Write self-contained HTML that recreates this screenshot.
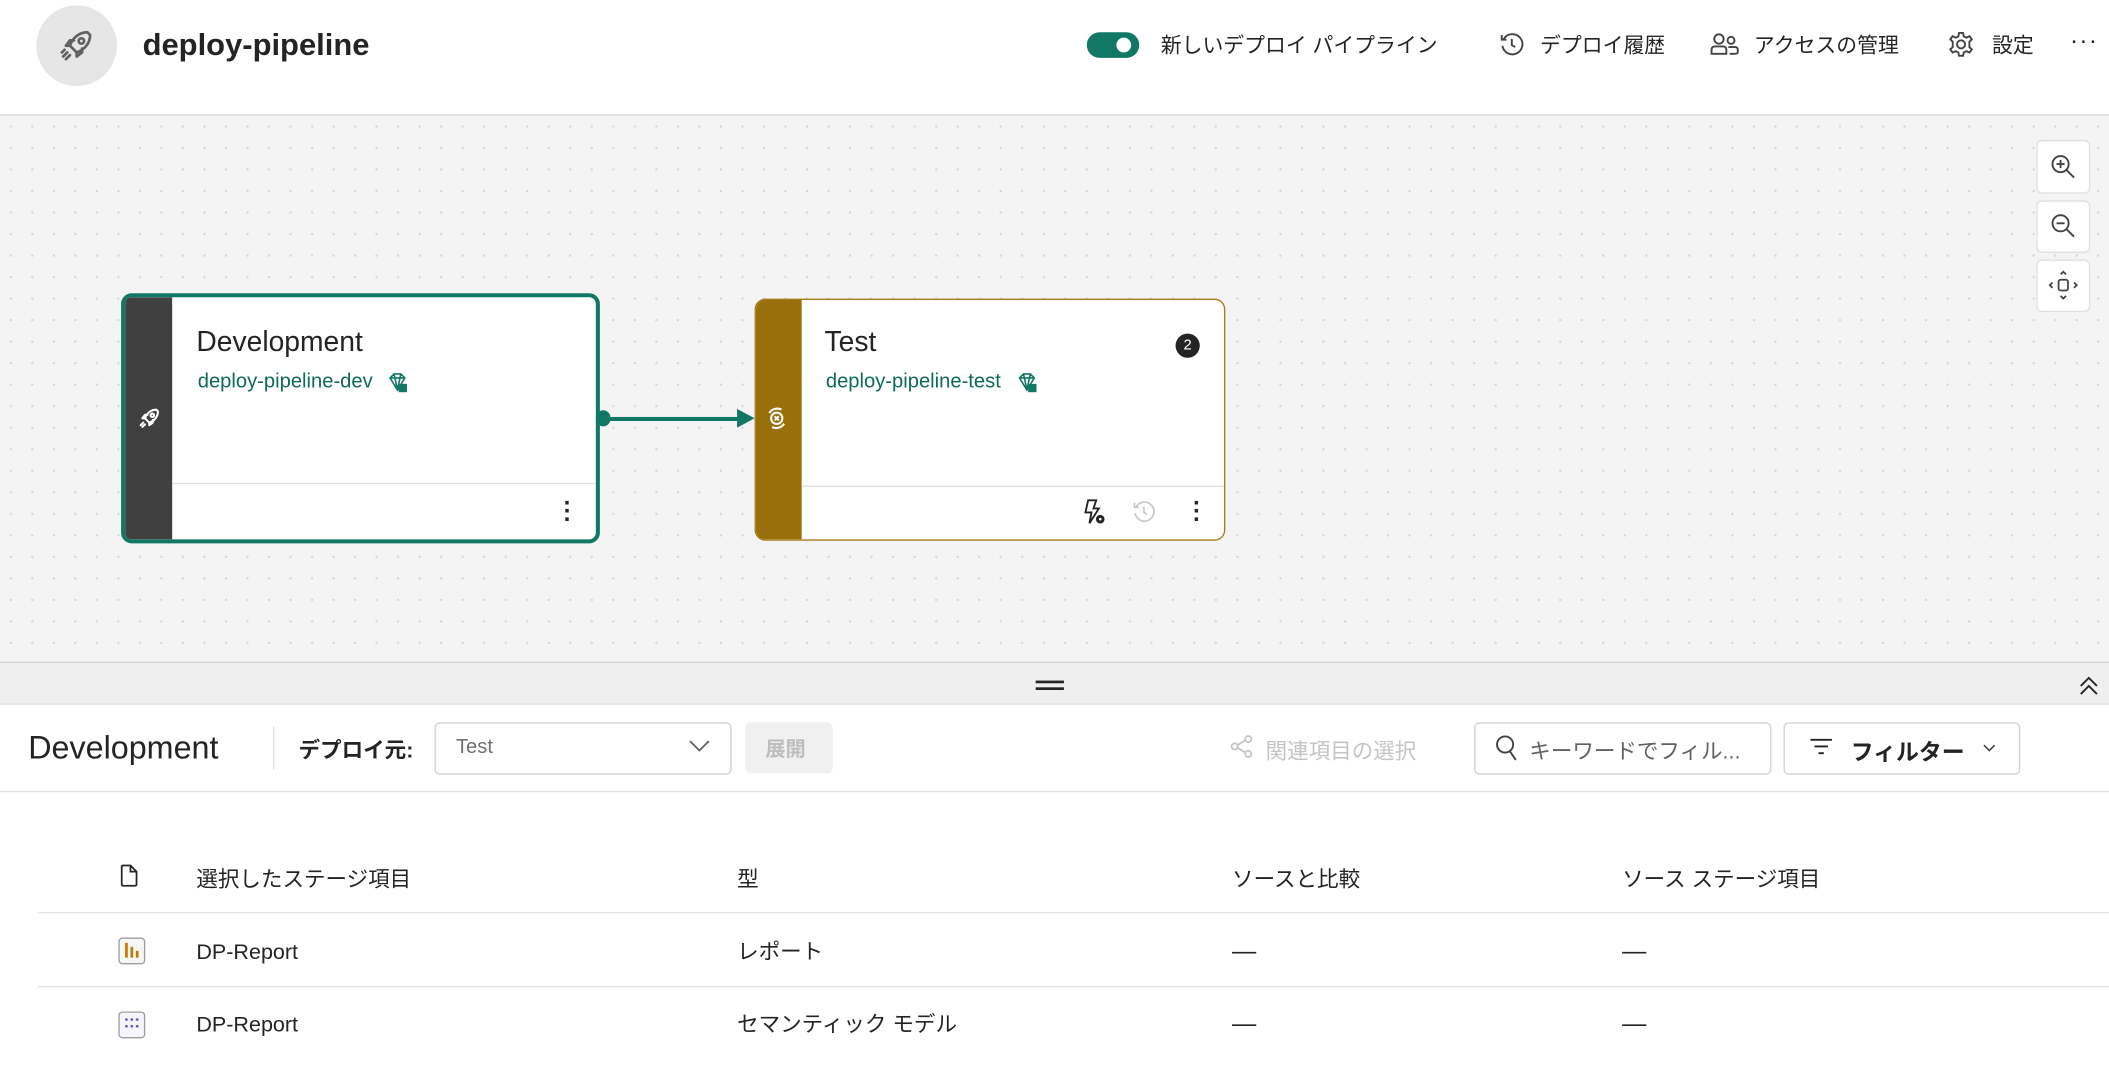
<!DOCTYPE html>
<html><head><meta charset="utf-8"><style>
html,body{margin:0;padding:0;width:2109px;height:1072px;overflow:hidden;background:#fff}
#w{position:absolute;left:0;top:0;width:1568px;height:797px;transform:scale(1.34503);transform-origin:0 0;font-family:"Liberation Sans","Noto Sans CJK JP",sans-serif;color:#242424}
.a{position:absolute}
.t{position:absolute;white-space:nowrap}
svg{position:absolute;overflow:visible}
</style></head><body><div id="w">
<!-- header -->
<div class="a" style="left:27px;top:4px;width:60px;height:60px;border-radius:50%;background:#e6e6e6"></div>
<svg style="left:43px;top:20px" width="28" height="28" viewBox="0 0 28 28" fill="none" stroke="#616161" stroke-width="2" stroke-linecap="round" stroke-linejoin="round"><path d="M22 4 C16 4 11 8 9 14 L14 19 C20 17 24 12 24 6 Z"/><circle cx="17.5" cy="10.5" r="2"/><path d="M9 14 L6 14 L9 10 L12 10 M14 19 L14 22 L18 19 L18 16"/><path d="M7 19 L4 22 M9 21 L6 24 M5 17 L3 19"/></svg>
<div class="t" style="left:106px;top:20px;font-size:23px;font-weight:bold;color:#242424">deploy-pipeline</div>

<div class="a" style="left:808px;top:24px;width:39px;height:19px;border-radius:10px;background:#117865"></div>
<div class="a" style="left:830px;top:28px;width:11px;height:11px;border-radius:50%;background:#fff"></div>
<div class="t" style="left:863px;top:22px;font-size:15.5px">新しいデプロイ パイプライン</div>
<svg style="left:1115px;top:24px" width="18" height="18" viewBox="0 0 18 18" fill="none" stroke="#424242" stroke-width="1.4"><path d="M3 5 A7.5 7.5 0 1 1 2 10"/><path d="M1.5 2 V5.5 H5"/><path d="M9 5 V9.5 L11.5 11"/></svg>
<div class="t" style="left:1145px;top:22px;font-size:15.5px">デプロイ履歴</div>
<svg style="left:1271px;top:24px" width="22" height="18" viewBox="0 0 22 18" fill="none" stroke="#424242" stroke-width="1.4"><circle cx="7" cy="5" r="3.5"/><circle cx="16" cy="6" r="2.6"/><path d="M1.5 16 V13 Q1.5 10.5 4 10.5 H10 Q12.5 10.5 12.5 13 V16 Z"/><path d="M14 11 H19 Q21 11 21 13 V15 Q21 16 18 16 H15"/></svg>
<div class="t" style="left:1304px;top:22px;font-size:15.5px">アクセスの管理</div>
<svg style="left:1448px;top:23px" width="20" height="20" viewBox="0 0 20 20" fill="none" stroke="#424242" stroke-width="1.4"><circle cx="10" cy="10" r="3"/><path d="M8.5 1.5 H11.5 L12 4 L14 5 L16.3 3.9 L18 6.3 L16.2 8 V10 L16.2 12 L18 13.7 L16.3 16.1 L14 15 L12 16 L11.5 18.5 H8.5 L8 16 L6 15 L3.7 16.1 L2 13.7 L3.8 12 V8 L2 6.3 L3.7 3.9 L6 5 L8 4 Z"/></svg>
<div class="t" style="left:1481px;top:22px;font-size:15.5px">設定</div>
<div class="t" style="left:1539px;top:20px;font-size:18px;letter-spacing:1px">···</div>
<div class="a" style="left:0;top:85px;width:1568px;height:1px;background:#d1d1d1"></div>

<!-- canvas -->
<div class="a" style="left:0;top:86px;width:1568px;height:406px;background-color:#f4f4f4;background-image:radial-gradient(#d6d6d6 0.8px,transparent 1px);background-size:16px 16px"></div>
<div class="a" style="left:0;top:492px;width:1568px;height:1px;background:#d1d1d1"></div>
<div class="a" style="left:1514px;top:104px;width:38px;height:38px;background:#fff;border:1px solid #e0e0e0;border-radius:4px"></div>
<div class="a" style="left:1514px;top:149px;width:38px;height:37px;background:#fff;border:1px solid #e0e0e0;border-radius:4px"></div>
<div class="a" style="left:1514px;top:193px;width:38px;height:37px;background:#fff;border:1px solid #e0e0e0;border-radius:4px"></div>
<svg style="left:1524px;top:114px" width="20" height="20" viewBox="0 0 20 20" fill="none" stroke="#424242" stroke-width="1.4"><circle cx="8" cy="8" r="6"/><path d="M12.5 12.5 L18 18 M8 5 V11 M5 8 H11"/></svg>
<svg style="left:1524px;top:158px" width="20" height="20" viewBox="0 0 20 20" fill="none" stroke="#424242" stroke-width="1.4"><circle cx="8" cy="8" r="6"/><path d="M12.5 12.5 L18 18 M5 8 H11"/></svg>
<svg style="left:1523px;top:201px" width="22" height="22" viewBox="0 0 22 22" fill="none" stroke="#424242" stroke-width="1.3"><rect x="7.5" y="7" width="7" height="8" rx="1.5"/><path d="M9 3 L11 1 L13 3 M9 19 L11 21 L13 19 M3 9 L1 11 L3 13 M19 9 L21 11 L19 13"/></svg>

<!-- dev card -->
<div class="a" style="left:90px;top:218px;width:350px;height:180px;border:3px solid #117865;border-radius:8px;background:#fff;overflow:hidden">
 <div class="a" style="left:0;top:0;width:35px;height:180px;background:#404040"></div>
 <div class="a" style="left:35px;top:138px;width:315px;height:1px;background:#e0e0e0"></div>
</div>
<svg style="left:102px;top:302px" width="18" height="18" viewBox="0 0 28 28" fill="none" stroke="#fff" stroke-width="2.4" stroke-linecap="round" stroke-linejoin="round"><path d="M22 4 C16 4 11 8 9 14 L14 19 C20 17 24 12 24 6 Z"/><circle cx="17.5" cy="10.5" r="2"/><path d="M9 14 L6 14 L9 10 L12 10 M14 19 L14 22 L18 19 L18 16"/><path d="M7 19 L4 22 M9 21 L6 24"/></svg>
<div class="t" style="left:146px;top:243px;font-size:21px;color:#242424">Development</div>
<div class="t" style="left:147px;top:275px;font-size:15px;color:#0e6a5a">deploy-pipeline-dev</div>
<svg style="left:288px;top:277px" width="15" height="15" viewBox="0 0 15 15" fill="none" stroke="#117865" stroke-width="1.2"><path d="M2 4 L5 1 H10 L13 4 L7.5 13 Z M2 4 H13 M5 1 L7.5 13 L10 1"/><rect x="9" y="9" width="5" height="5" fill="#117865"/></svg>
<div class="t" style="left:418px;top:371px;font-size:18px;font-weight:bold;line-height:6px;width:8px;text-align:center">·<br>·<br>·</div>

<!-- connector -->
<div class="a" style="left:443px;top:305px;width:11px;height:12px;border-radius:50%;background:#117865"></div>
<div class="a" style="left:449px;top:310px;width:103px;height:3px;background:#117865"></div>
<svg style="left:548px;top:304px" width="14" height="14"><path d="M0 0 L13 7 L0 14 Z" fill="#117865"/></svg>

<!-- test card -->
<div class="a" style="left:561px;top:222px;width:348px;height:178px;border:1px solid #a57c1b;border-radius:8px;background:#fff;overflow:hidden">
 <div class="a" style="left:0;top:0;width:34px;height:178px;background:#986f0b"></div>
 <div class="a" style="left:34px;top:138px;width:314px;height:1px;background:#e0e0e0"></div>
</div>
<svg style="left:569px;top:302px" width="17" height="18" viewBox="0 0 17 18" fill="none" stroke="#fff" stroke-width="1.5"><circle cx="8.5" cy="9" r="4.2"/><path d="M7 7.5 L10 10.5 M10 7.5 L7 10.5"/><path d="M3 5 A7 7 0 0 1 12 2.5 M14 13 A7 7 0 0 1 5 15.5"/></svg>
<div class="t" style="left:613px;top:243px;font-size:21px">Test</div>
<div class="a" style="left:874px;top:248px;width:18px;height:18px;border-radius:50%;background:#242424;color:#fff;font-size:11px;text-align:center;line-height:18px">2</div>
<div class="t" style="left:614px;top:275px;font-size:15px;color:#0e6a5a">deploy-pipeline-test</div>
<svg style="left:756px;top:277px" width="15" height="15" viewBox="0 0 15 15" fill="none" stroke="#117865" stroke-width="1.2"><path d="M2 4 L5 1 H10 L13 4 L7.5 13 Z M2 4 H13 M5 1 L7.5 13 L10 1"/><rect x="9" y="9" width="5" height="5" fill="#117865"/></svg>
<svg style="left:804px;top:371px" width="20" height="20" viewBox="0 0 20 20" fill="none" stroke="#242424" stroke-width="1.4"><path d="M5 1 H11 L9 7 H13 L6 18 L7.5 10 H3 Z"/><circle cx="14" cy="15" r="2.5" fill="#242424"/><circle cx="14" cy="15" r="1" fill="#fff" stroke="none"/></svg>
<svg style="left:842px;top:372px" width="17" height="17" viewBox="0 0 18 18" fill="none" stroke="#c8c8c8" stroke-width="1.4"><path d="M3 5 A7.5 7.5 0 1 1 2 10"/><path d="M1.5 2 V5.5 H5"/><path d="M9 5 V9.5 L11.5 11"/></svg>
<div class="t" style="left:886px;top:371px;font-size:18px;font-weight:bold;line-height:6px;width:8px;text-align:center">·<br>·<br>·</div>

<!-- splitter -->
<div class="a" style="left:0;top:493px;width:1568px;height:30px;background:#efefef"></div>
<div class="a" style="left:770px;top:506px;width:21px;height:2px;background:#242424"></div>
<div class="a" style="left:770px;top:511px;width:21px;height:2px;background:#242424"></div>
<svg style="left:1545px;top:502px" width="16" height="16" viewBox="0 0 16 16" fill="none" stroke="#242424" stroke-width="1.4"><path d="M2 8 L8 2 L14 8 M2 14 L8 8 L14 14"/></svg>
<div class="a" style="left:0;top:523px;width:1568px;height:1px;background:#e0e0e0"></div>

<!-- toolbar -->
<div class="t" style="left:21px;top:543px;font-size:24px;color:#242424">Development</div>
<div class="a" style="left:203px;top:540px;width:1px;height:32px;background:#e0e0e0"></div>
<div class="t" style="left:222px;top:544px;font-size:16px;font-weight:bold">デプロイ元:</div>
<div class="a" style="left:323px;top:537px;width:219px;height:37px;border:1px solid #d1d1d1;border-radius:4px;background:#fff"></div>
<div class="t" style="left:339px;top:547px;font-size:15px;color:#707070">Test</div>
<svg style="left:512px;top:550px" width="16" height="10" viewBox="0 0 16 10" fill="none" stroke="#616161" stroke-width="1.3"><path d="M1 1 L8 8 L15 1"/></svg>
<div class="a" style="left:554px;top:537px;width:65px;height:38px;border-radius:4px;background:#f0f0f0"></div>
<div class="t" style="left:569px;top:546px;font-size:15px;font-weight:bold;color:#bdbdbd">展開</div>
<svg style="left:914px;top:546px" width="18" height="18" viewBox="0 0 18 18" fill="none" stroke="#c4c4c4" stroke-width="1.3"><circle cx="4" cy="9" r="2.3"/><circle cx="14" cy="3.5" r="2.3"/><circle cx="14" cy="14.5" r="2.3"/><path d="M6 8 L12 4.5 M6 10 L12 13.5"/></svg>
<div class="t" style="left:941px;top:545px;font-size:16px;color:#c4c4c4">関連項目の選択</div>
<div class="a" style="left:1096px;top:537px;width:219px;height:37px;border:1px solid #d1d1d1;border-radius:4px;background:#fff"></div>
<svg style="left:1111px;top:546px" width="18" height="20" viewBox="0 0 18 20" fill="none" stroke="#424242" stroke-width="1.4"><circle cx="8" cy="7.5" r="6"/><path d="M11.5 12.5 L16 19"/></svg>
<div class="t" style="left:1137px;top:545px;font-size:16px;color:#616161">キーワードでフィル...</div>
<div class="a" style="left:1326px;top:537px;width:174px;height:37px;border:1px solid #d1d1d1;border-radius:4px;background:#fff"></div>
<svg style="left:1345px;top:548px" width="18" height="14" viewBox="0 0 18 14" fill="none" stroke="#242424" stroke-width="1.4"><path d="M1 2 H17 M4 7 H14 M7 12 H11"/></svg>
<div class="t" style="left:1376px;top:545px;font-size:17px;font-weight:bold">フィルター</div>
<svg style="left:1474px;top:553px" width="10" height="6" viewBox="0 0 10 6" fill="none" stroke="#424242" stroke-width="1.2"><path d="M1 1 L5 5 L9 1"/></svg>
<div class="a" style="left:0;top:588px;width:1568px;height:1px;background:#e0e0e0"></div>

<!-- table -->
<svg style="left:89px;top:642px" width="14" height="18" viewBox="0 0 14 18" fill="none" stroke="#242424" stroke-width="1.3"><path d="M2 1.5 H8 L12.5 6 V15.5 Q12.5 16.5 11.5 16.5 H2.5 Q1.5 16.5 1.5 15.5 V2.5 Q1.5 1.5 2.5 1.5 Z M8 1.5 V6 H12.5"/></svg>
<div class="t" style="left:146px;top:640px;font-size:16px">選択したステージ項目</div>
<div class="t" style="left:548px;top:640px;font-size:16px">型</div>
<div class="t" style="left:916px;top:640px;font-size:16px">ソースと比較</div>
<div class="t" style="left:1206px;top:640px;font-size:16px">ソース ステージ項目</div>
<div class="a" style="left:28px;top:678px;width:1540px;height:1px;background:#e6e6e6"></div>
<div class="a" style="left:88px;top:697px;width:18px;height:18px;border:1px solid #9e9e9e;border-radius:3px;background:#f7f7f7"></div>
<div class="a" style="left:93px;top:701px;width:2px;height:11px;background:#c07a00"></div>
<div class="a" style="left:97px;top:704px;width:2px;height:8px;background:#c07a00"></div>
<div class="a" style="left:101px;top:707px;width:2px;height:5px;background:#c07a00"></div>
<div class="t" style="left:146px;top:700px;font-size:16px">DP-Report</div>
<div class="t" style="left:548px;top:694px;font-size:16px">レポート</div>
<div class="t" style="left:916px;top:697px;font-size:18px">—</div>
<div class="t" style="left:1206px;top:697px;font-size:18px">—</div>
<div class="a" style="left:28px;top:733px;width:1540px;height:1px;background:#e6e6e6"></div>
<div class="a" style="left:88px;top:752px;width:18px;height:18px;border:1px solid #9e9e9e;border-radius:3px;background:#f7f5fc"></div>
<svg style="left:91px;top:755px" width="14" height="12"><g fill="#6b4fc7"><circle cx="3" cy="3" r="1"/><circle cx="7" cy="3" r="1"/><circle cx="11" cy="3" r="1"/><circle cx="3" cy="8" r="1"/><circle cx="7" cy="8" r="1"/><circle cx="11" cy="8" r="1"/></g></svg>
<div class="t" style="left:146px;top:754px;font-size:16px">DP-Report</div>
<div class="t" style="left:548px;top:748px;font-size:16px">セマンティック モデル</div>
<div class="t" style="left:916px;top:751px;font-size:18px">—</div>
<div class="t" style="left:1206px;top:751px;font-size:18px">—</div>
</div></body></html>
